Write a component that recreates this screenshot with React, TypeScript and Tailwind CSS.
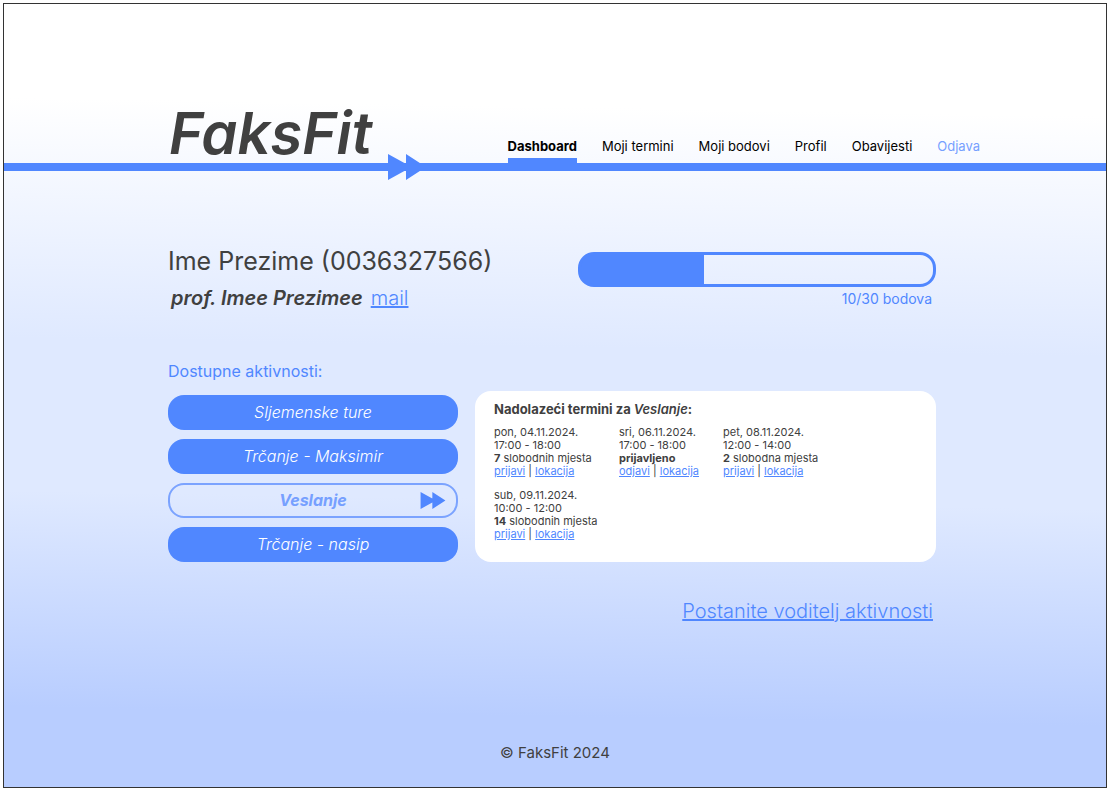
type Session = {
  date: string;
  time: string;
  count?: number;
  status: string;
  action: string;
};

const navItems = ["Moji termini", "Moji bodovi", "Profil", "Obavijesti"];

const activities = ["Sljemenske ture", "Trčanje - Maksimir", "Veslanje", "Trčanje - nasip"];

const sessions: Session[] = [
  { date: "pon, 04.11.2024.", time: "17:00 - 18:00", count: 7, status: "slobodnih mjesta", action: "prijavi" },
  { date: "sri, 06.11.2024.", time: "17:00 - 18:00", status: "prijavljeno", action: "odjavi" },
  { date: "pet, 08.11.2024.", time: "12:00 - 14:00", count: 2, status: "slobodna mjesta", action: "prijavi" },
  { date: "sub, 09.11.2024.", time: "10:00 - 12:00", count: 14, status: "slobodnih mjesta", action: "prijavi" },
];

function DoubleArrow({ className }: { className: string }) {
  return (
    <svg viewBox="0 0 38 26" className={className} fill="#5087ff" aria-hidden="true">
      <path d="M0 0 L20 11 V15 L0 26 Z M18 0 L38 13 L18 26 Z" />
    </svg>
  );
}

function Header() {
  return (
    <header className="border-b-8 border-[#5087ff] pr-1.5">
      <div className="mx-auto flex h-[159px] max-w-3xl items-end">
        <div className="relative flex-1">
          <h1 className="pl-px text-[58px] leading-[60px] font-semibold italic [font-feature-settings:'cv11']">FaksFit</h1>
          <DoubleArrow className="absolute -bottom-[17px] left-[220px] h-[26px] w-[38px]" />
        </div>
        <nav className="-mr-11 flex gap-[25px] text-[13px] leading-4 text-black">
          <a href="#dashboard" className="border-b-[5px] border-[#5087ff] pb-1 font-bold">
            Dashboard
          </a>
          {navItems.map((item) => (
            <a key={item} href="#">
              {item}
            </a>
          ))}
          <a href="#odjava" className="text-[#76a0ff]">
            Odjava
          </a>
        </nav>
      </div>
    </header>
  );
}

function SessionCard({ session }: { session: Session }) {
  return (
    <li>
      <p>{session.date}</p>
      <p>{session.time}</p>
      {session.count === undefined ? (
        <p className="font-bold">{session.status}</p>
      ) : (
        <p>
          <b>{session.count}</b> {session.status}
        </p>
      )}
      <p>
        <a href="#termin" className="text-[#5087ff] underline">
          {session.action}
        </a>{" "}
        |{" "}
        <a href="#lokacija" className="text-[#5087ff] underline">
          lokacija
        </a>
      </p>
    </li>
  );
}

export default function App() {
  return (
    <div className="flex min-h-screen bg-white pt-[3px] pr-px pb-[2px] pl-[3px] font-['Inter','Liberation_Sans',sans-serif] text-[#404040]">
      <div className="flex flex-1 flex-col border border-[#333] bg-[linear-gradient(181deg,#ffffff_14%,#dfe9ff_44%,#dfe9ff_63%,#b8cdff_90%)]">
        <Header />
        <div className="flex flex-1 flex-col pr-1.5">
          <main className="mx-auto w-full max-w-3xl flex-1">
            <section className="flex justify-between pt-[74px]">
              <div>
                <h2 className="text-[25px] leading-8">Ime Prezime (0036327566)</h2>
                <p className="mt-2 flex gap-2 pl-[3px] text-[20px] leading-[26px]">
                  <span className="font-semibold italic">prof. Imee Prezimee</span>
                  <a href="#mail" className="font-light text-[#5087ff] underline">
                    mail
                  </a>
                </p>
              </div>
              <div className="w-[358px] pt-[7px]">
                <div
                  role="progressbar"
                  aria-label="Bodovi"
                  aria-valuemin={0}
                  aria-valuemax={30}
                  aria-valuenow={10}
                  className="h-[35px] rounded-2xl border-[3px] border-[#5087ff] bg-[linear-gradient(90deg,#5087ff_35%,transparent_35%)] bg-no-repeat"
                />
                <p className="mt-0.5 pr-1 text-right text-[14px] leading-5 text-[#5087ff]">10/30 bodova</p>
              </div>
            </section>

            <section className="pt-[50px]">
              <h3 className="text-[16px] leading-5 text-[#5087ff]">Dostupne aktivnosti:</h3>
              <div className="flex items-end gap-[17px] pt-2.5">
                <div className="flex w-[290px] flex-col gap-[9px]">
                  {activities.map((name) =>
                    name === "Veslanje" ? (
                      <button
                        key={name}
                        className="relative h-[35px] rounded-2xl border-2 border-[#7ba3ff] pb-0.5 text-[16px] font-bold text-[#76a0ff] italic [font-feature-settings:'cv11']"
                      >
                        {name}
                        <DoubleArrow className="absolute top-[7px] right-2.5 h-[17px] w-[26px]" />
                      </button>
                    ) : (
                      <button
                        key={name}
                        className="h-[35px] rounded-2xl bg-[#5087ff] pb-0.5 text-[16px] font-light text-white italic [font-feature-settings:'cv11']"
                      >
                        {name}
                      </button>
                    ),
                  )}
                </div>
                <div className="h-[171px] flex-1 rounded-2xl bg-white px-[19px] pt-[9px]">
                  <h4 className="text-[13px] leading-[18px] font-bold">
                    Nadolazeći termini za <i className="font-semibold [font-feature-settings:'cv11']">Veslanje</i>:
                  </h4>
                  <ul className="mt-2 grid grid-cols-[104px_83px_1fr] gap-x-[21px] gap-y-[11px] text-[11px] leading-[13px] whitespace-nowrap">
                    {sessions.map((session) => (
                      <SessionCard key={session.date} session={session} />
                    ))}
                  </ul>
                </div>
              </div>
            </section>

            <p className="pt-9 pr-[3px] text-right text-[20px] leading-[26px] font-light text-[#5087ff]">
              <a href="#voditelj" className="underline">
                Postanite voditelj aktivnosti
              </a>
            </p>
          </main>
          <footer className="pb-6 pl-1.5 text-center text-[15px] leading-5">© FaksFit 2024</footer>
        </div>
      </div>
    </div>
  );
}
